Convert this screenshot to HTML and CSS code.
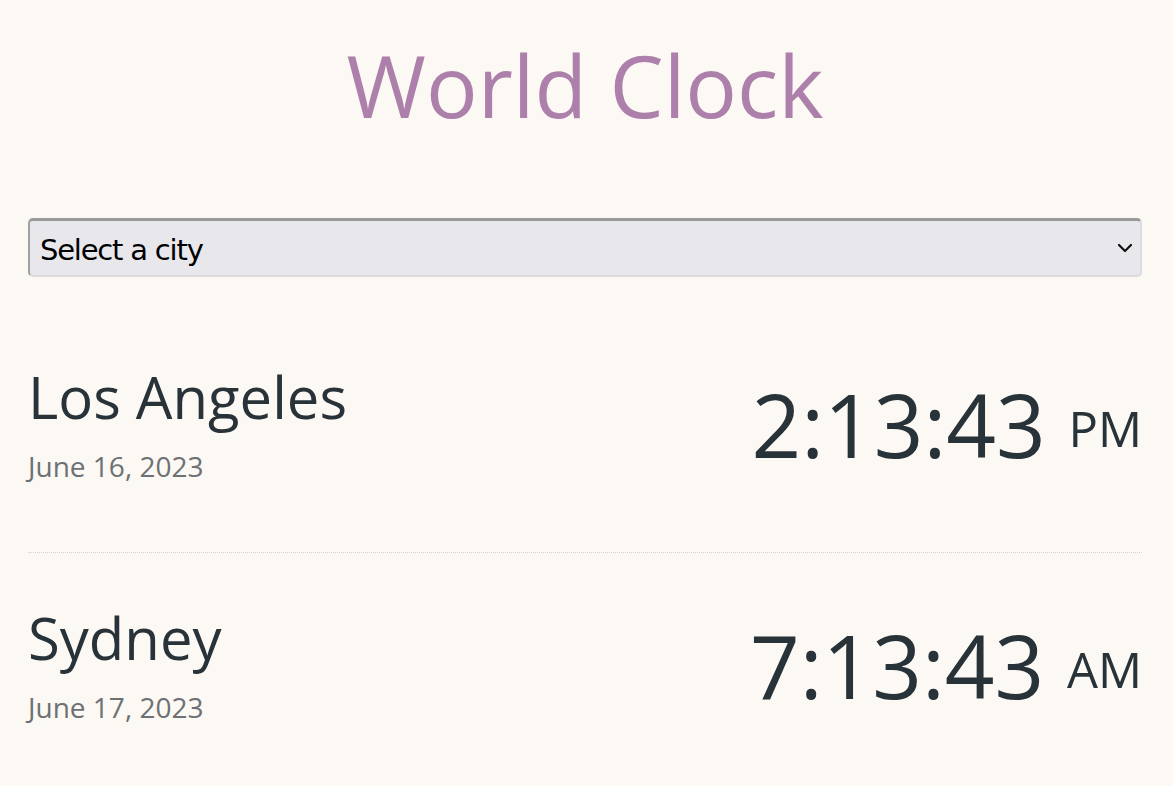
FILE: index.html
```html
<!DOCTYPE html>
<html lang="en">
<head>
<meta charset="utf-8">
<title>World Clock</title>
<link rel="stylesheet" href="styles.css">
</head>
<body>
<div class="container">
  <h1 class="title">World Clock</h1>
  <div class="select-wrap">
    <select class="city-select">
      <option>Select a city</option>
    </select>
    <svg class="chevron" width="16" height="10" viewBox="0 0 16 10"><path d="M2 2 L8 8 L14 2" fill="none" stroke="#111" stroke-width="2.2" stroke-linecap="round" stroke-linejoin="round"/></svg>
  </div>
  <div class="cities">
    <div class="city">
      <div class="info">
        <h2 class="name">Los Angeles</h2>
        <div class="date">June 16, 2023</div>
      </div>
      <div class="time">2:13:43 <small>PM</small></div>
    </div>
    <div class="city">
      <div class="info">
        <h2 class="name">Sydney</h2>
        <div class="date">June 17, 2023</div>
      </div>
      <div class="time">7:13:43 <small>AM</small></div>
    </div>
  </div>
</div>
</body>
</html>
```
FILE: styles.css
```css
html, body {
  margin: 0;
  padding: 0;
  background: #fcf8f3;
}
body {
  font-family: "Open Sans", "DejaVu Sans", sans-serif;
  color: #283239;
}
.container {
  padding: 0 31px 0 28px;
}
.title {
  margin: 0;
  padding-top: 29px;
  text-align: center;
  font-weight: 400;
  font-size: 86px;
  line-height: 112px;
  color: #ad7fab;
}
.select-wrap {
  position: relative;
  margin-top: 77px;
}
.city-select {
  display: block;
  width: 100%;
  height: 59px;
  appearance: none;
  -webkit-appearance: none;
  background: #e8e7ec;
  border: 2px solid #dcdbe0;
  border-top: 3px solid #9a9a9a;
  border-left: 2px solid #a0a0a0;
  border-radius: 5px;
  padding: 3px 40px 0 10px;
  font-family: "DejaVu Sans", sans-serif;
  font-size: 29px;
  letter-spacing: -1.2px;
  color: #000;
}
.chevron {
  position: absolute;
  right: 9px;
  top: 25px;
}
.cities {
  margin-top: 35px;
}
.city {
  display: flex;
  justify-content: space-between;
  align-items: center;
  padding: 50px 0 69px;
  border-bottom: 1px dotted #d6d3cf;
}
.city:last-child {
  border-bottom: none;
}
.name {
  margin: 0;
  font-weight: 400;
  font-size: 58px;
  line-height: 70px;
}
.date {
  margin-top: 17px;
  font-size: 28px;
  color: #6d7174;
  line-height: 34px;
}
.time {
  font-size: 87px;
  line-height: 1;
  white-space: nowrap;
  margin-top: 3px;
}
.time small {
  font-size: 49px;
  vertical-align: 11px;
}
```
